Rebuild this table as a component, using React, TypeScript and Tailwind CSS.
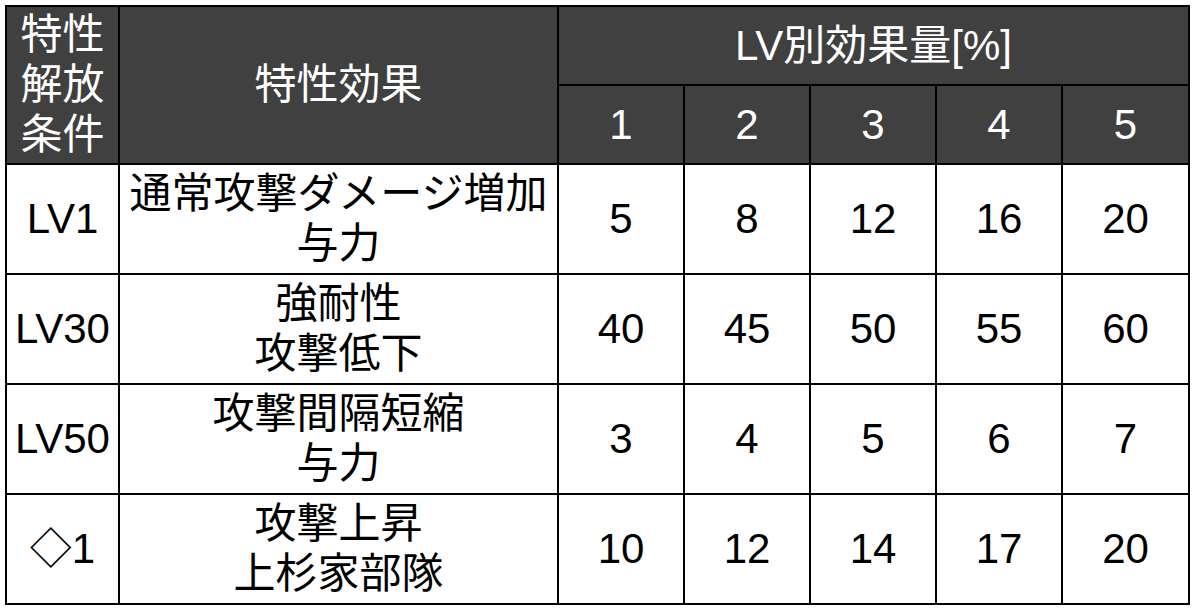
import React from 'react';

const levels = ['1', '2', '3', '4', '5'];

const rows = [
  { cond: 'LV1', effect: ['通常攻撃ダメージ増加', '与力'], values: [5, 8, 12, 16, 20] },
  { cond: 'LV30', effect: ['強耐性', '攻撃低下'], values: [40, 45, 50, 55, 60] },
  { cond: 'LV50', effect: ['攻撃間隔短縮', '与力'], values: [3, 4, 5, 6, 7] },
  { cond: '◇1', effect: ['攻撃上昇', '上杉家部隊'], values: [10, 12, 14, 17, 20] },
];

export default function App() {
  return (
    <div
      className="bg-white w-[1195px] h-[611px] pl-[5px] pt-[5px]"
      style={{ fontFamily: '"Liberation Sans", "Noto Sans CJK JP", sans-serif' }}
    >
      <table className="border-collapse table-fixed text-[42px] leading-[50px] text-center">
        <colgroup>
          <col className="w-[113px]" />
          <col className="w-[439px]" />
          <col className="w-[126px]" />
          <col className="w-[126px]" />
          <col className="w-[126px]" />
          <col className="w-[126px]" />
          <col className="w-[127px]" />
        </colgroup>
        <thead className="bg-[#404040] text-white">
          <tr className="h-[79px]">
            <th rowSpan={2} className="border-2 border-black font-normal p-0 align-middle">
              特性<br />解放<br />条件
            </th>
            <th rowSpan={2} className="border-2 border-black font-normal p-0 align-middle">
              特性効果
            </th>
            <th colSpan={5} className="border-2 border-black font-normal p-0 align-middle">
              LV別効果量[%]
            </th>
          </tr>
          <tr className="h-[79px]">
            {levels.map((lv) => (
              <th key={lv} className="border-2 border-black font-normal p-0 align-middle">
                {lv}
              </th>
            ))}
          </tr>
        </thead>
        <tbody className="text-black">
          {rows.map((row) => (
            <tr key={row.cond} className="h-[110px]">
              <td className="border-2 border-black p-0 align-middle">{row.cond}</td>
              <td className="border-2 border-black p-0 align-middle">
                {row.effect.map((line) => (
                  <div key={line} className="whitespace-nowrap">{line}</div>
                ))}
              </td>
              {row.values.map((v, i) => (
                <td key={i} className="border-2 border-black p-0 align-middle">
                  {v}
                </td>
              ))}
            </tr>
          ))}
        </tbody>
      </table>
    </div>
  );
}
